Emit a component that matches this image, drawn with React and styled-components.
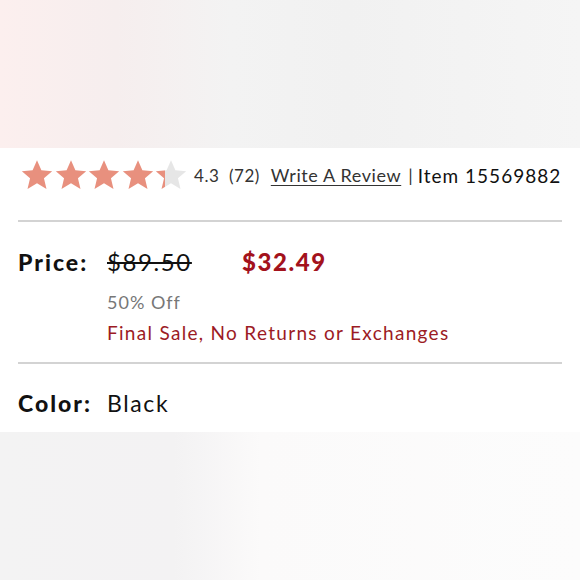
import React from 'react';
import styled, { createGlobalStyle } from 'styled-components';

const Global = createGlobalStyle`
  html, body { margin: 0; padding: 0; background: #fff; }
  body { font-family: Lato, "Noto Sans", sans-serif; color: #111; }
`;

const Page = styled.div`
  width: 580px;
  height: 580px;
  display: flex;
  flex-direction: column;
  overflow: hidden;
`;

const Blur = styled.div`
  height: ${p => p.h}px;
  flex: none;
  background: ${p => p.bg};
`;

const Card = styled.div`
  flex: 1;
  background: #fff;
  padding: 10px 18px 0 18px;
  display: flex;
  flex-direction: column;
`;

const RatingRow = styled.div`
  display: flex;
  align-items: center;
  height: 34px;
  padding-left: 2px;
  font-size: 18px;
`;

const Stars = styled.div`
  display: flex;
  margin-right: 6px;
`;

const Score = styled.span`
  color: #333;
  font-size: 17px;
  margin-right: 11px;
  letter-spacing: 0.5px;
`;

const Link = styled.span`
  text-decoration: underline;
  text-decoration-thickness: 1px;
  text-underline-offset: 3px;
  color: #333;
  letter-spacing: 0.6px;
`;

const Pipe = styled.span`
  margin: 0 5px 0 7px;
  color: #333;
`;

const ItemNo = styled.span`
  color: #111;
  font-size: 19px;
  letter-spacing: 1px;
`;

const Divider = styled.hr`
  border: none;
  height: 2px;
  background: #d3d3d3;
  margin: ${p => p.m};
  width: 100%;
`;

const InfoRow = styled.div`
  display: grid;
  grid-template-columns: 89px 1fr;
  align-items: baseline;
`;

const Label = styled.div`
  font-size: 23px;
  font-weight: 900;
  letter-spacing: 2px;
  color: #111;
`;

const Prices = styled.div`
  display: flex;
  flex-direction: column;
`;

const PriceLine = styled.div`
  display: flex;
  align-items: baseline;
  gap: 50px;
`;

const Old = styled.span`
  font-size: 24px;
  text-decoration: line-through;
  text-decoration-thickness: 2px;
  letter-spacing: 1.6px;
  color: #111;
`;

const Sale = styled.span`
  font-size: 24px;
  font-weight: 900;
  color: #a3121c;
  letter-spacing: 1.6px;
`;

const Off = styled.div`
  margin-top: 15px;
  font-size: 18px;
  color: #777;
  letter-spacing: 1px;
`;

const Final = styled.div`
  margin-top: 8px;
  font-size: 19px;
  color: #9c1b24;
  letter-spacing: 1.3px;
`;

const Value = styled.div`
  font-size: 23px;
  letter-spacing: 1.6px;
  color: #111;
`;

const STAR = 'M12 1.5l3.1 7.1 7.6.7-5.8 5 1.8 7.5L12 17.8l-6.7 4 1.8-7.5-5.8-5 7.6-.7z';

const Star = ({ fill, id }) => (
  <svg width="34" height="34" viewBox="0 0 24 24" style={{ marginRight: '-0.4px' }}>
    <defs>
      <linearGradient id={id}>
        <stop offset={`${fill * 100}%`} stopColor="#e8907e" />
        <stop offset={`${fill * 100}%`} stopColor="#e6e6e6" />
      </linearGradient>
    </defs>
    <path d={STAR} fill={`url(#${id})`} />
  </svg>
);

export default function App() {
  const rating = 4.3;
  return (
    <Page>
      <Global />
      <Blur h={148} bg="linear-gradient(90deg, #fcefee 0%, #f6eeee 20%, #f3f3f3 40%, #f1f1f1 60%, #f5f5f5 100%)" />
      <Card>
        <RatingRow>
          <Stars>
            {[0, 1, 2, 3, 4].map(i => (
              <Star key={i} id={`s${i}`} fill={Math.max(0, Math.min(1, rating - i))} />
            ))}
          </Stars>
          <Score>4.3&nbsp; (72)</Score>
          <Link>Write A Review</Link>
          <Pipe>|</Pipe>
          <ItemNo>Item 15569882</ItemNo>
        </RatingRow>
        <Divider m="28px 0 25px 0" />
        <InfoRow>
          <Label>Price:</Label>
          <Prices>
            <PriceLine>
              <Old>$89.50</Old>
              <Sale>$32.49</Sale>
            </PriceLine>
            <Off>50% Off</Off>
            <Final>Final Sale, No Returns or Exchanges</Final>
          </Prices>
        </InfoRow>
        <Divider m="18px 0 25px 0" />
        <InfoRow>
          <Label>Color:</Label>
          <Value>Black</Value>
        </InfoRow>
      </Card>
      <Blur h={148} bg="linear-gradient(90deg, #f3f3f3 0%, #f3f2f3 30%, #fbfafa 45%, #fcfcfc 100%)" />
    </Page>
  );
}
